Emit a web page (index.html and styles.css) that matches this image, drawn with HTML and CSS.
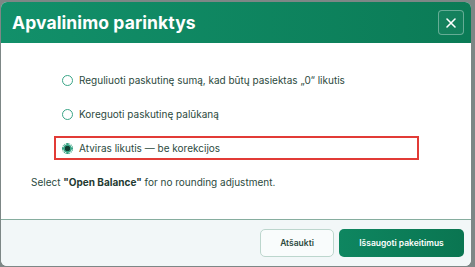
FILE: index.html
```html
<!DOCTYPE html>
<html lang="lt">
<head>
  <meta charset="UTF-8" />
  <meta name="viewport" content="width=device-width, initial-scale=1.0" />
  <title>Apvalinimo parinktys</title>
  <link rel="stylesheet" href="styles.css">
</head>
<body>
  <div class="modal">
    <div class="modal-header">
      <h2>Apvalinimo parinktys</h2>
      <button class="close-btn" aria-label="Uždaryti">
        <svg width="12" height="12" viewBox="0 0 12 12">
          <path d="M2 2 L10 10 M10 2 L2 10" stroke="#fff" stroke-width="1.6" stroke-linecap="round" />
        </svg>
      </button>
    </div>

    <div class="modal-body">
      <div class="options">
        <label class="option">
          <span class="radio"></span>
          <span>Reguliuoti paskutinę sumą, kad būtų pasiektas „0“ likutis</span>
        </label>
        <label class="option">
          <span class="radio"></span>
          <span>Koreguoti paskutinę palūkaną</span>
        </label>
        <label class="option selected">
          <span class="radio checked"></span>
          <span>Atviras likutis — be korekcijos</span>
        </label>
      </div>
      <p class="hint">Select <strong>"Open Balance"</strong> for no rounding adjustment.</p>
    </div>

    <div class="modal-footer">
      <button class="btn btn-cancel">Atšaukti</button>
      <button class="btn btn-save">Išsaugoti pakeitimus</button>
    </div>
  </div>
</body>
</html>
```

FILE: styles.css
```css
:root {
  --green: #0d845d;
  --green-dark: #0a7551;
  --text: #2c4a40;
}

* {
  box-sizing: border-box;
  margin: 0;
  padding: 0;
}

body {
  font-family: Inter, 'Noto Sans', sans-serif;
  background: #7d8786;
  width: 475px;
  height: 267px;
  overflow: hidden;
}

.modal {
  width: 470px;
  height: 264px;
  margin: 2px 0 0 1px;
  background: #fff;
  border-radius: 6px;
  overflow: hidden;
  display: flex;
  flex-direction: column;
}

.modal-header {
  height: 41px;
  background: linear-gradient(90deg, #12906a, #0b7b56);
  display: flex;
  align-items: center;
  justify-content: space-between;
  padding: 0 7px 0 11px;
}

.modal-header h2 {
  color: #fff;
  font-size: 17.5px;
  font-weight: 700;
  letter-spacing: 0.1px;
}

.close-btn {
  width: 26px;
  height: 25px;
  border: 1px solid rgba(255, 255, 255, 0.35);
  border-radius: 4px;
  background: rgba(255, 255, 255, 0.04);
  display: flex;
  align-items: center;
  justify-content: center;
}

.modal-body {
  flex: 1;
  padding: 25px 0 0 0;
}

.options {
  display: flex;
  flex-direction: column;
  gap: 10px;
  padding-left: 53px;
}

.option {
  width: 365px;
  height: 24px;
  display: flex;
  align-items: center;
  gap: 6px;
  padding-left: 6px;
  font-size: 10px;
  color: var(--text);
  border: 2px solid transparent;
}

.option.selected {
  border-color: #e23b36;
}

.radio {
  width: 11px;
  height: 11px;
  border: 1.2px solid #3aa587;
  border-radius: 50%;
  flex-shrink: 0;
}

.radio.checked {
  border: 1px dotted #2f9e7d;
  background: radial-gradient(circle, #123f33 0 2.5px, #3aa587 3px 4px, #e6f4ef 4.5px);
}

.hint {
  margin: 16px 0 0 30px;
  font-size: 10px;
  color: var(--text);
}

.hint strong {
  font-weight: 700;
  color: #1f3a31;
}

.modal-footer {
  height: 47px;
  border-top: 1px solid #86ad9f;
  background: #f2f7f8;
  display: flex;
  align-items: center;
  justify-content: flex-end;
  gap: 5px;
  padding: 0 7px 0 0;
}

.btn {
  height: 28px;
  border-radius: 5px;
  font-family: Inter, 'Noto Sans', sans-serif;
  font-size: 8.5px;
  font-weight: 600;
}

.btn-cancel {
  width: 74px;
  background: #f9fcfc;
  border: 1px solid #bcd6cd;
  color: var(--text);
}

.btn-save {
  width: 125px;
  background: linear-gradient(90deg, #0e8660, var(--green-dark));
  border: none;
  color: #fff;
}
```
